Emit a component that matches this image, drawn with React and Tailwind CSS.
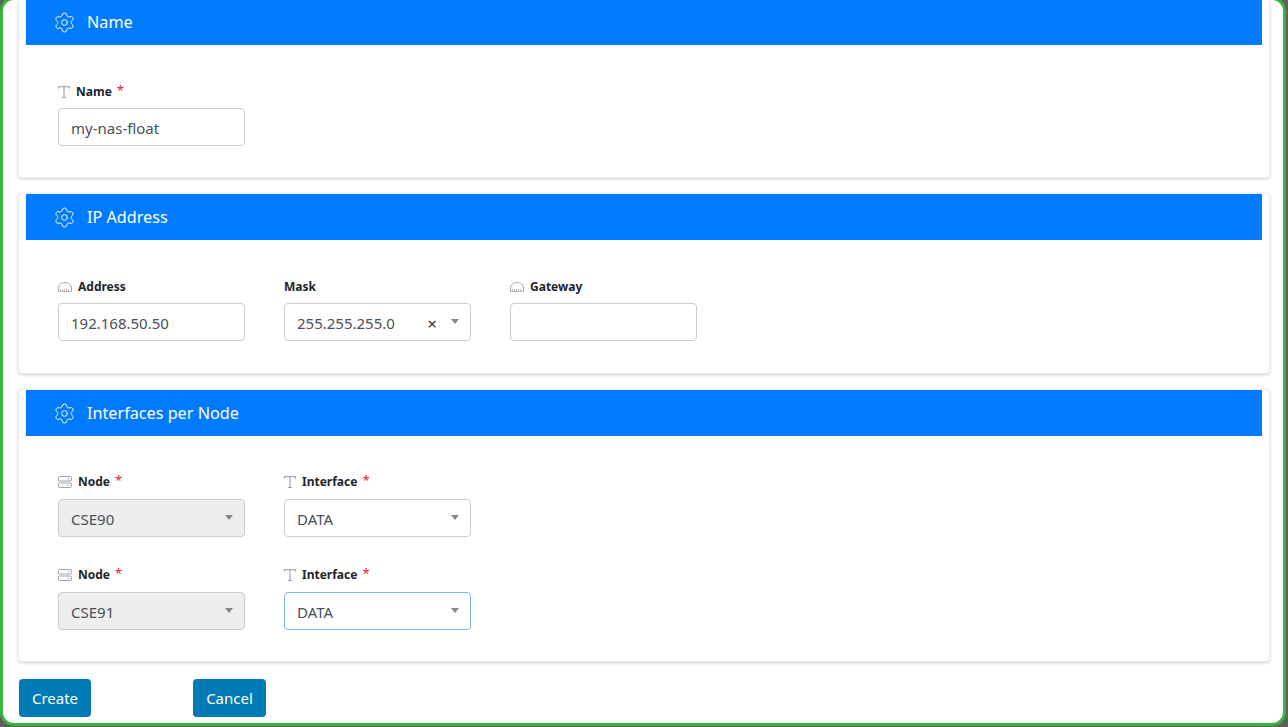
import { Settings } from "lucide-react";

const TextIcon = () => (
  <svg width="12" height="12" viewBox="0 0 12 12" fill="none" stroke="#8a8a8a" strokeWidth="0.9" className="shrink-0">
    <path d="M0.5 2.5V0.7H11.5V2.5M6 0.7V11.5M4.3 11.5H7.7" />
  </svg>
);

const ArchIcon = () => (
  <svg width="14" height="10" viewBox="0 0 14 10" fill="none" stroke="#8f8f8f" strokeWidth="0.8" className="shrink-0">
    <path d="M0.5 9.5V6C0.5 2.8 3.5 0.5 7 0.5C10.5 0.5 13.5 2.8 13.5 6V9.5" />
    <path d="M0.5 9.5H13.5M2.5 9.5V7M4.5 9.5V7M6.5 9.5V7M8.5 9.5V7M10.5 9.5V7" strokeWidth="0.6" />
  </svg>
);

const ServerIcon = () => (
  <svg width="14" height="12" viewBox="0 0 14 12" fill="none" stroke="#999999" strokeWidth="0.9" className="shrink-0">
    <rect x="0.5" y="0.5" width="13" height="4.5" rx="1.2" />
    <rect x="0.5" y="7" width="13" height="4.5" rx="1.2" />
    <path d="M9.5 2.8H11.5M9.5 9.2H11.5" />
  </svg>
);

const Caret = ({ clear }) => (
  <span
    className={`h-0 w-0 border-x-[4px] border-t-[5px] border-x-transparent border-t-[#888888] ${
      clear ? "-mt-[1px]" : "-mt-[2px]"
    }`}
  />
);

function Field({ icon, label, required, raised, children }) {
  return (
    <div className="w-[187px]">
      <div
        className={`flex h-[19px] items-center gap-[6px] text-[12px] font-bold text-[#212529] ${
          raised ? "pb-[3px]" : "pb-[1px]"
        }`}
      >
        {icon}
        <span>{label}</span>
        {required && <span className="-mt-[3px] ml-[-1px] text-[13px] font-normal text-[#e0202c]">*</span>}
      </div>
      <div className="mt-[6px]">{children}</div>
    </div>
  );
}

function Box({ value, disabled, focused, clear, caret }) {
  return (
    <div
      className={`flex h-[38px] items-center rounded border pl-[12px] pr-[11px] text-[15px] text-[#495057] ${
        disabled ? "bg-[#eeeeee]" : "bg-white"
      } ${focused ? "border-[#80b5e8]" : "border-[#cccccc]"}`}
    >
      <span className="flex-1 pt-[2px]">{value}</span>
      {clear && <span className="mr-[14px] mt-[3px] text-[17px] leading-none text-[#333333]">×</span>}
      {caret && <Caret clear={clear} />}
    </div>
  );
}

function Card({ title, className = "", bodyClass = "", children }) {
  return (
    <section className={`rounded border border-[#eeeeee] bg-white px-[7px] shadow-[0_1px_3px_rgba(0,0,0,0.2)] ${className}`}>
      <div className="flex h-[46px] items-center gap-[11px] bg-[#007bff] pl-[27px] text-[16.2px] text-white">
        <Settings size={23} strokeWidth={1} />
        <span className="pt-[1px]">{title}</span>
      </div>
      <div className={`px-[32px] ${bodyClass}`}>{children}</div>
    </section>
  );
}

export default function App() {
  return (
    <div className="h-[727px] overflow-hidden bg-[#5f5f5f] pr-[2px] font-['Noto_Sans','Open_Sans',sans-serif]">
      <div className="-mt-[3px] h-[729px] overflow-hidden rounded-[14px] border-[3px] border-[#36b53c] bg-white">
        <div className="-mt-[1px] pl-[15px] pr-[13px]">
          <Card title="Name" className="border-t-0" bodyClass="pt-[38px] pb-[31px]">
            <Field icon={<TextIcon />} label="Name" required>
              <Box value="my-nas-float" />
            </Field>
          </Card>

          <Card title="IP Address" className="mt-[15px]" bodyClass="pt-[38px] pb-[32px]">
            <div className="flex gap-[39px]">
              <Field icon={<ArchIcon />} label="Address">
                <Box value="192.168.50.50" />
              </Field>
              <Field label="Mask">
                <Box value="255.255.255.0" clear caret />
              </Field>
              <Field icon={<ArchIcon />} label="Gateway">
                <Box value="" />
              </Field>
            </div>
          </Card>

          <Card title="Interfaces per Node" className="mt-[15px]" bodyClass="pt-[38px] pb-[31px]">
            <div className="flex flex-col gap-[30px]">
              {["CSE90", "CSE91"].map((node, i) => (
                <div key={node} className="flex gap-[39px]">
                  <Field icon={<ServerIcon />} label="Node" required raised>
                    <Box value={node} disabled caret />
                  </Field>
                  <Field icon={<TextIcon />} label="Interface" required raised>
                    <Box value="DATA" caret focused={i === 1} />
                  </Field>
                </div>
              ))}
            </div>
          </Card>

          <div className="mt-[17px] flex gap-[102px] pl-[1px]">
            <button className="h-[38px] w-[72px] rounded bg-[#007bb5] pt-[1px] text-[15px] text-white">Create</button>
            <button className="h-[38px] w-[73px] rounded bg-[#007bb5] pt-[1px] text-[15px] text-white">Cancel</button>
          </div>
        </div>
      </div>
    </div>
  );
}
